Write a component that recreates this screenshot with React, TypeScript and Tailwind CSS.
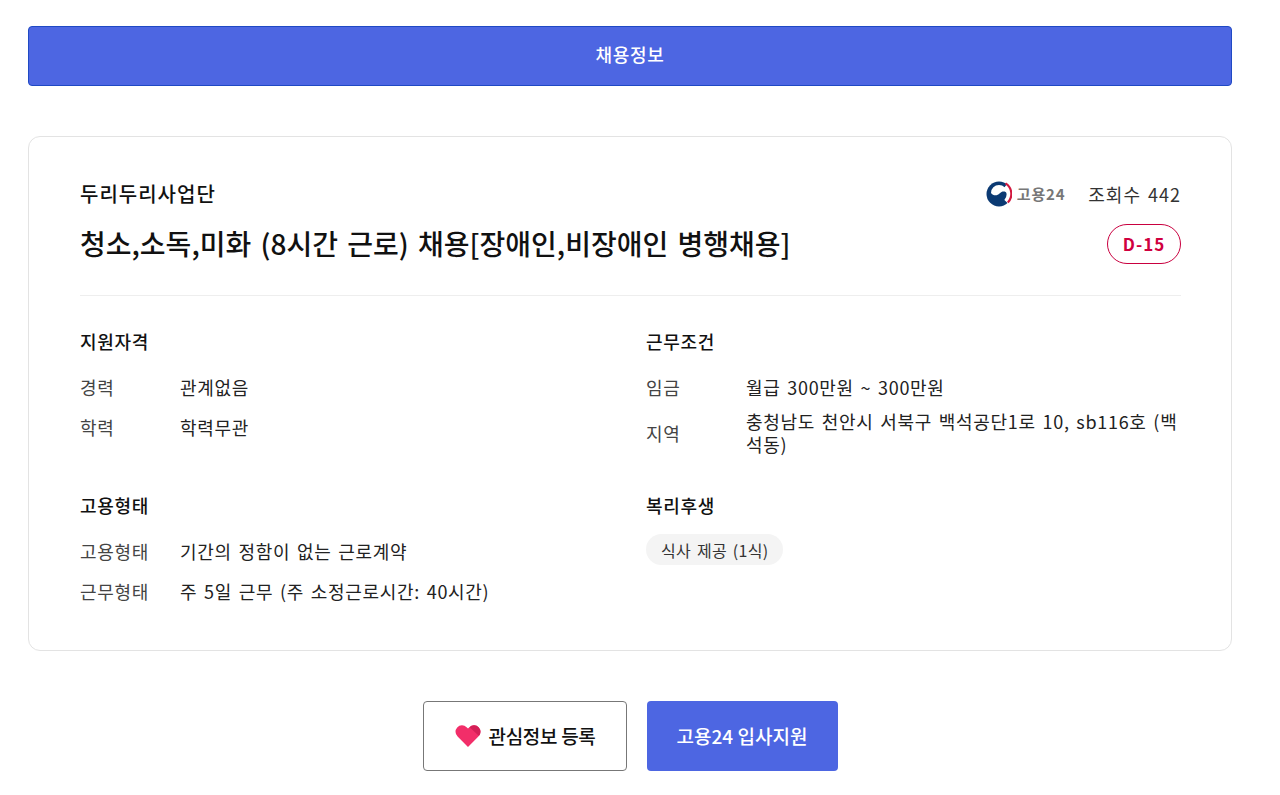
import React from "react";

function Row({ label, children }: { label: string; children: React.ReactNode }) {
  return (
    <div className="flex items-center min-h-[40px] py-[3px]">
      <div className="w-[100px] shrink-0 text-[#444]">{label}</div>
      <div className="flex-1 text-[#222] leading-[23px]">{children}</div>
    </div>
  );
}

function Heading({ children }: { children: React.ReactNode }) {
  return <h3 className="text-[18px] font-medium text-[#111] leading-[26px] mb-[13px]">{children}</h3>;
}

function GovLogo() {
  return (
    <svg width="26" height="26" viewBox="0 0 26 26">
      <circle cx="13" cy="13" r="12.5" fill="#0b3a73" />
      <path d="M19.5 5A10.8 10.8 0 0 1 20.5 21" fill="none" stroke="#fff" strokeWidth="6" />
      <path d="M19.5 2.4A12.3 12.3 0 0 1 21.8 21.5" fill="none" stroke="#d2183f" strokeWidth="2.2" />
      <path d="M5 12A8 8 0 0 1 21 12C19.5 10 16 9.5 13.5 12.5 11.5 15 7 15 5 12Z" fill="#fff" />
    </svg>
  );
}

function Heart() {
  return (
    <svg width="26" height="24" viewBox="0 0 26 24">
      <path d="M13 23 2.6 12.6A6.6 6.6 0 0 1 2.2 3.4 6.7 6.7 0 0 1 11.6 3.2L13 4.6l1.4-1.4a6.7 6.7 0 0 1 9.4.2 6.6 6.6 0 0 1-.4 9.2Z" fill="#f22e69" />
      <path d="M14.4 3.2a6.7 6.7 0 0 1 9.4.2 6.6 6.6 0 0 1 .2 8.6L16.5 5Z" fill="#d41f57" />
    </svg>
  );
}

export default function App() {
  return (
    <div
      className="w-[1280px] h-[795px] overflow-hidden bg-white pt-[26px] pl-[28px] pr-[48px] text-[18px] tracking-[0.7px] [word-spacing:2px]"
      style={{ fontFamily: '"Noto Sans CJK KR", "Noto Sans", sans-serif' }}
    >
      <div className="h-[60px] pb-[3px] rounded-[4px] border border-[#1f49c4] bg-[#4d66e2] flex items-center justify-center text-white text-[18px] font-medium">
        채용정보
      </div>

      <div className="mt-[50px] h-[515px] rounded-[12px] border border-[#e3e3e3] pl-[51px] pr-[50px] pt-[43px]">
        <div className="flex items-center justify-between h-[28px]">
          <div className="text-[20px] font-medium text-[#111] tracking-[1px]">두리두리사업단</div>
          <div className="flex items-center">
            <GovLogo />
            <span className="ml-[5px] text-[15px] font-bold text-[#777] tracking-[0.8px]">고용24</span>
            <span className="ml-[23px] text-[#333] tracking-[1px]">조회수 442</span>
          </div>
        </div>
        <div className="flex items-center justify-between mt-[16px] h-[40px]">
          <h1 className="text-[28px] pb-[2px] font-medium text-[#111] tracking-normal [word-spacing:3px]">
            청소,소독,미화 (8시간 근로) 채용[장애인,비장애인 병행채용]
          </h1>
          <span className="w-[74px] h-[40px] rounded-full border border-[#c9003f] flex items-center justify-center text-[17px] font-bold text-[#d0003f] tracking-[1px]">
            D-15
          </span>
        </div>
        <div className="mt-[31px] border-t border-[#eee]" />

        <div className="grid grid-cols-2 gap-x-[31px] mt-[32px]">
          <section className="h-[164px]">
            <Heading>지원자격</Heading>
            <Row label="경력">관계없음</Row>
            <Row label="학력">학력무관</Row>
          </section>
          <section className="h-[164px]">
            <Heading>근무조건</Heading>
            <Row label="임금">월급 300만원 ~ 300만원</Row>
            <Row label="지역">충청남도 천안시 서북구 백석공단1로 10, sb116호 (백석동)</Row>
          </section>
          <section>
            <Heading>고용형태</Heading>
            <Row label="고용형태">기간의 정함이 없는 근로계약</Row>
            <Row label="근무형태">주 5일 근무 (주 소정근로시간: 40시간)</Row>
          </section>
          <section>
            <Heading>복리후생</Heading>
            <span className="mt-[3px] inline-flex items-center h-[31px] px-[15px] rounded-full bg-[#f4f4f4] text-[16px] text-[#333] tracking-[0.3px] [word-spacing:2px]">
              식사 제공 (1식)
            </span>
          </section>
        </div>
      </div>

      <div className="mt-[50px] flex justify-center gap-[20px]">
        <button className="w-[204px] h-[70px] pl-[2px] rounded-[4px] border border-[#777] bg-white flex items-center justify-center gap-[7px] text-[19px] font-medium text-[#111] tracking-[-0.3px]">
          <Heart />
          관심정보 등록
        </button>
        <button className="w-[191px] h-[70px] rounded-[4px] bg-[#4d66e2] text-[19px] font-medium text-white tracking-normal">
          고용24 입사지원
        </button>
      </div>
    </div>
  );
}
